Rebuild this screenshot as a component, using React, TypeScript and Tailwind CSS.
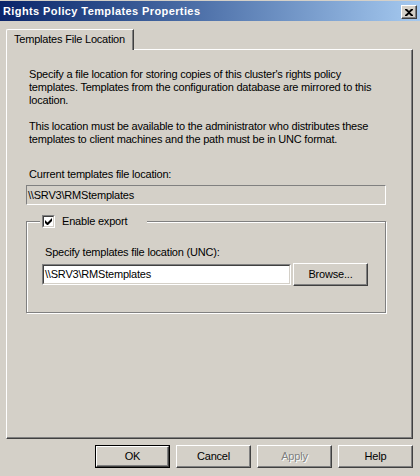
import React from 'react';

const CloseButton = () => (
  <div className="mb-[2px] flex h-[14px] w-[16px] items-center justify-center self-end border-l border-t border-white border-r border-b border-r-[#404040] border-b-[#404040] bg-[#d4d0c8] shadow-[inset_-1px_-1px_0_#808080]">
    <svg width="8" height="7" viewBox="0 0 8 7" className="mr-px">
      <path d="M0 0h2l2 2 2-2h2v1L5 3.5 8 6v1H6L4 5 2 7H0V6l3-2.5L0 1z" fill="#000" />
    </svg>
  </div>
);

const DialogButton = ({ label, isDefault, disabled }: { label: string; isDefault?: boolean; disabled?: boolean }) => (
  <div className={isDefault ? 'h-[23px] w-[75px] border border-black' : 'h-[23px] w-[75px]'}>
    <div className="flex h-full w-full items-center justify-center border-l border-t border-white border-r border-b border-r-[#404040] border-b-[#404040] bg-[#d4d0c8] shadow-[inset_-1px_-1px_0_#808080]">
      <span className={disabled ? 'text-[#808080] [text-shadow:1px_1px_0_#fff]' : ''}>{label}</span>
    </div>
  </div>
);

const Checkbox = () => (
  <div className="h-[13px] w-[13px] border-l border-t border-[#808080] border-r border-b border-r-white border-b-white">
    <div className="flex h-full w-full items-center justify-center border-l border-t border-[#404040] border-r border-b border-r-[#d4d0c8] border-b-[#d4d0c8] bg-white">
      <svg width="7" height="7" viewBox="0 0 7 7">
        <path d="M0 2v3l2 2h1l4-4V0L2.5 4.5z" fill="#000" />
      </svg>
    </div>
  </div>
);

export default function App() {
  return (
    <div className="h-[476px] w-[420px] overflow-hidden bg-[#d4d0c8] pt-px font-['Liberation_Sans',Arial,sans-serif] text-[11px] leading-[13px] tracking-[-0.2px] text-black">
      {/* title bar */}
      <div className="flex h-[20px] justify-between bg-gradient-to-r from-[#0a246a] to-[#a6caf0] pl-[3px] pr-[3px]">
        <span className="self-center font-bold tracking-[0.4px] text-white">Rights Policy Templates Properties</span>
        <CloseButton />
      </div>

      {/* tab strip + page */}
      <div className="ml-[6px] mt-[8px] w-[407px]">
        <div className="relative z-10 -mb-px flex h-[21px] w-[128px] items-center rounded-tl-[2px] border-l border-t border-r border-white border-r-[#404040] bg-[#d4d0c8] pb-[2px] pl-[7px] shadow-[inset_-1px_0_0_#808080]">
          Templates File Location
        </div>
        <div className="h-[390px] border-l border-t border-white border-r border-b border-r-[#404040] border-b-[#404040] pl-[19px] pt-[18px] shadow-[inset_-1px_-1px_0_#808080]">
          <p className="pl-[3px]">
            Specify a file location for storing copies of this cluster's rights policy
            <br />
            templates. Templates from the configuration database are mirrored to this
            <br />
            location.
          </p>
          <p className="mt-[13px] pl-[3px]">
            This location must be available to the administrator who distributes these
            <br />
            templates to client machines and the path must be in UNC format.
          </p>
          <p className="mt-[22px] pl-[3px]">Current templates file location:</p>
          <div className="mt-[4px] flex h-[20px] w-[360px] items-center border-l border-t border-[#808080] border-r border-b border-r-white border-b-white pl-[1px]">
            \\SRV3\RMStemplates
          </div>

          {/* group box */}
          <div className="relative mt-[16px] w-[360px] border border-[#808080] pb-[26px] pl-[15px] pt-[24px] shadow-[1px_1px_0_#fff,inset_1px_1px_0_#fff]">
            <div className="absolute -top-[7px] left-[13px] flex h-[13px] w-[107px] items-center gap-[7px] bg-[#d4d0c8] pl-[2px]">
              <Checkbox />
              <span>Enable export</span>
            </div>
            <p className="pl-[3px]">Specify templates file location (UNC):</p>
            <div className="mt-[4px] flex items-center gap-[2px]">
              <div className="h-[21px] w-[249px] border-l border-t border-[#808080] border-r border-b border-r-white border-b-white">
                <div className="flex h-full items-center border-l border-t border-[#404040] border-r border-b border-r-[#d4d0c8] border-b-[#d4d0c8] bg-white pl-[1px]">
                  \\SRV3\RMStemplates
                </div>
              </div>
              <DialogButton label="Browse..." />
            </div>
          </div>
        </div>
      </div>

      {/* dialog buttons */}
      <div className="mt-[6px] flex justify-end gap-[6px] pr-[7px]">
        <DialogButton label="OK" isDefault />
        <DialogButton label="Cancel" />
        <DialogButton label="Apply" disabled />
        <DialogButton label="Help" />
      </div>
    </div>
  );
}
